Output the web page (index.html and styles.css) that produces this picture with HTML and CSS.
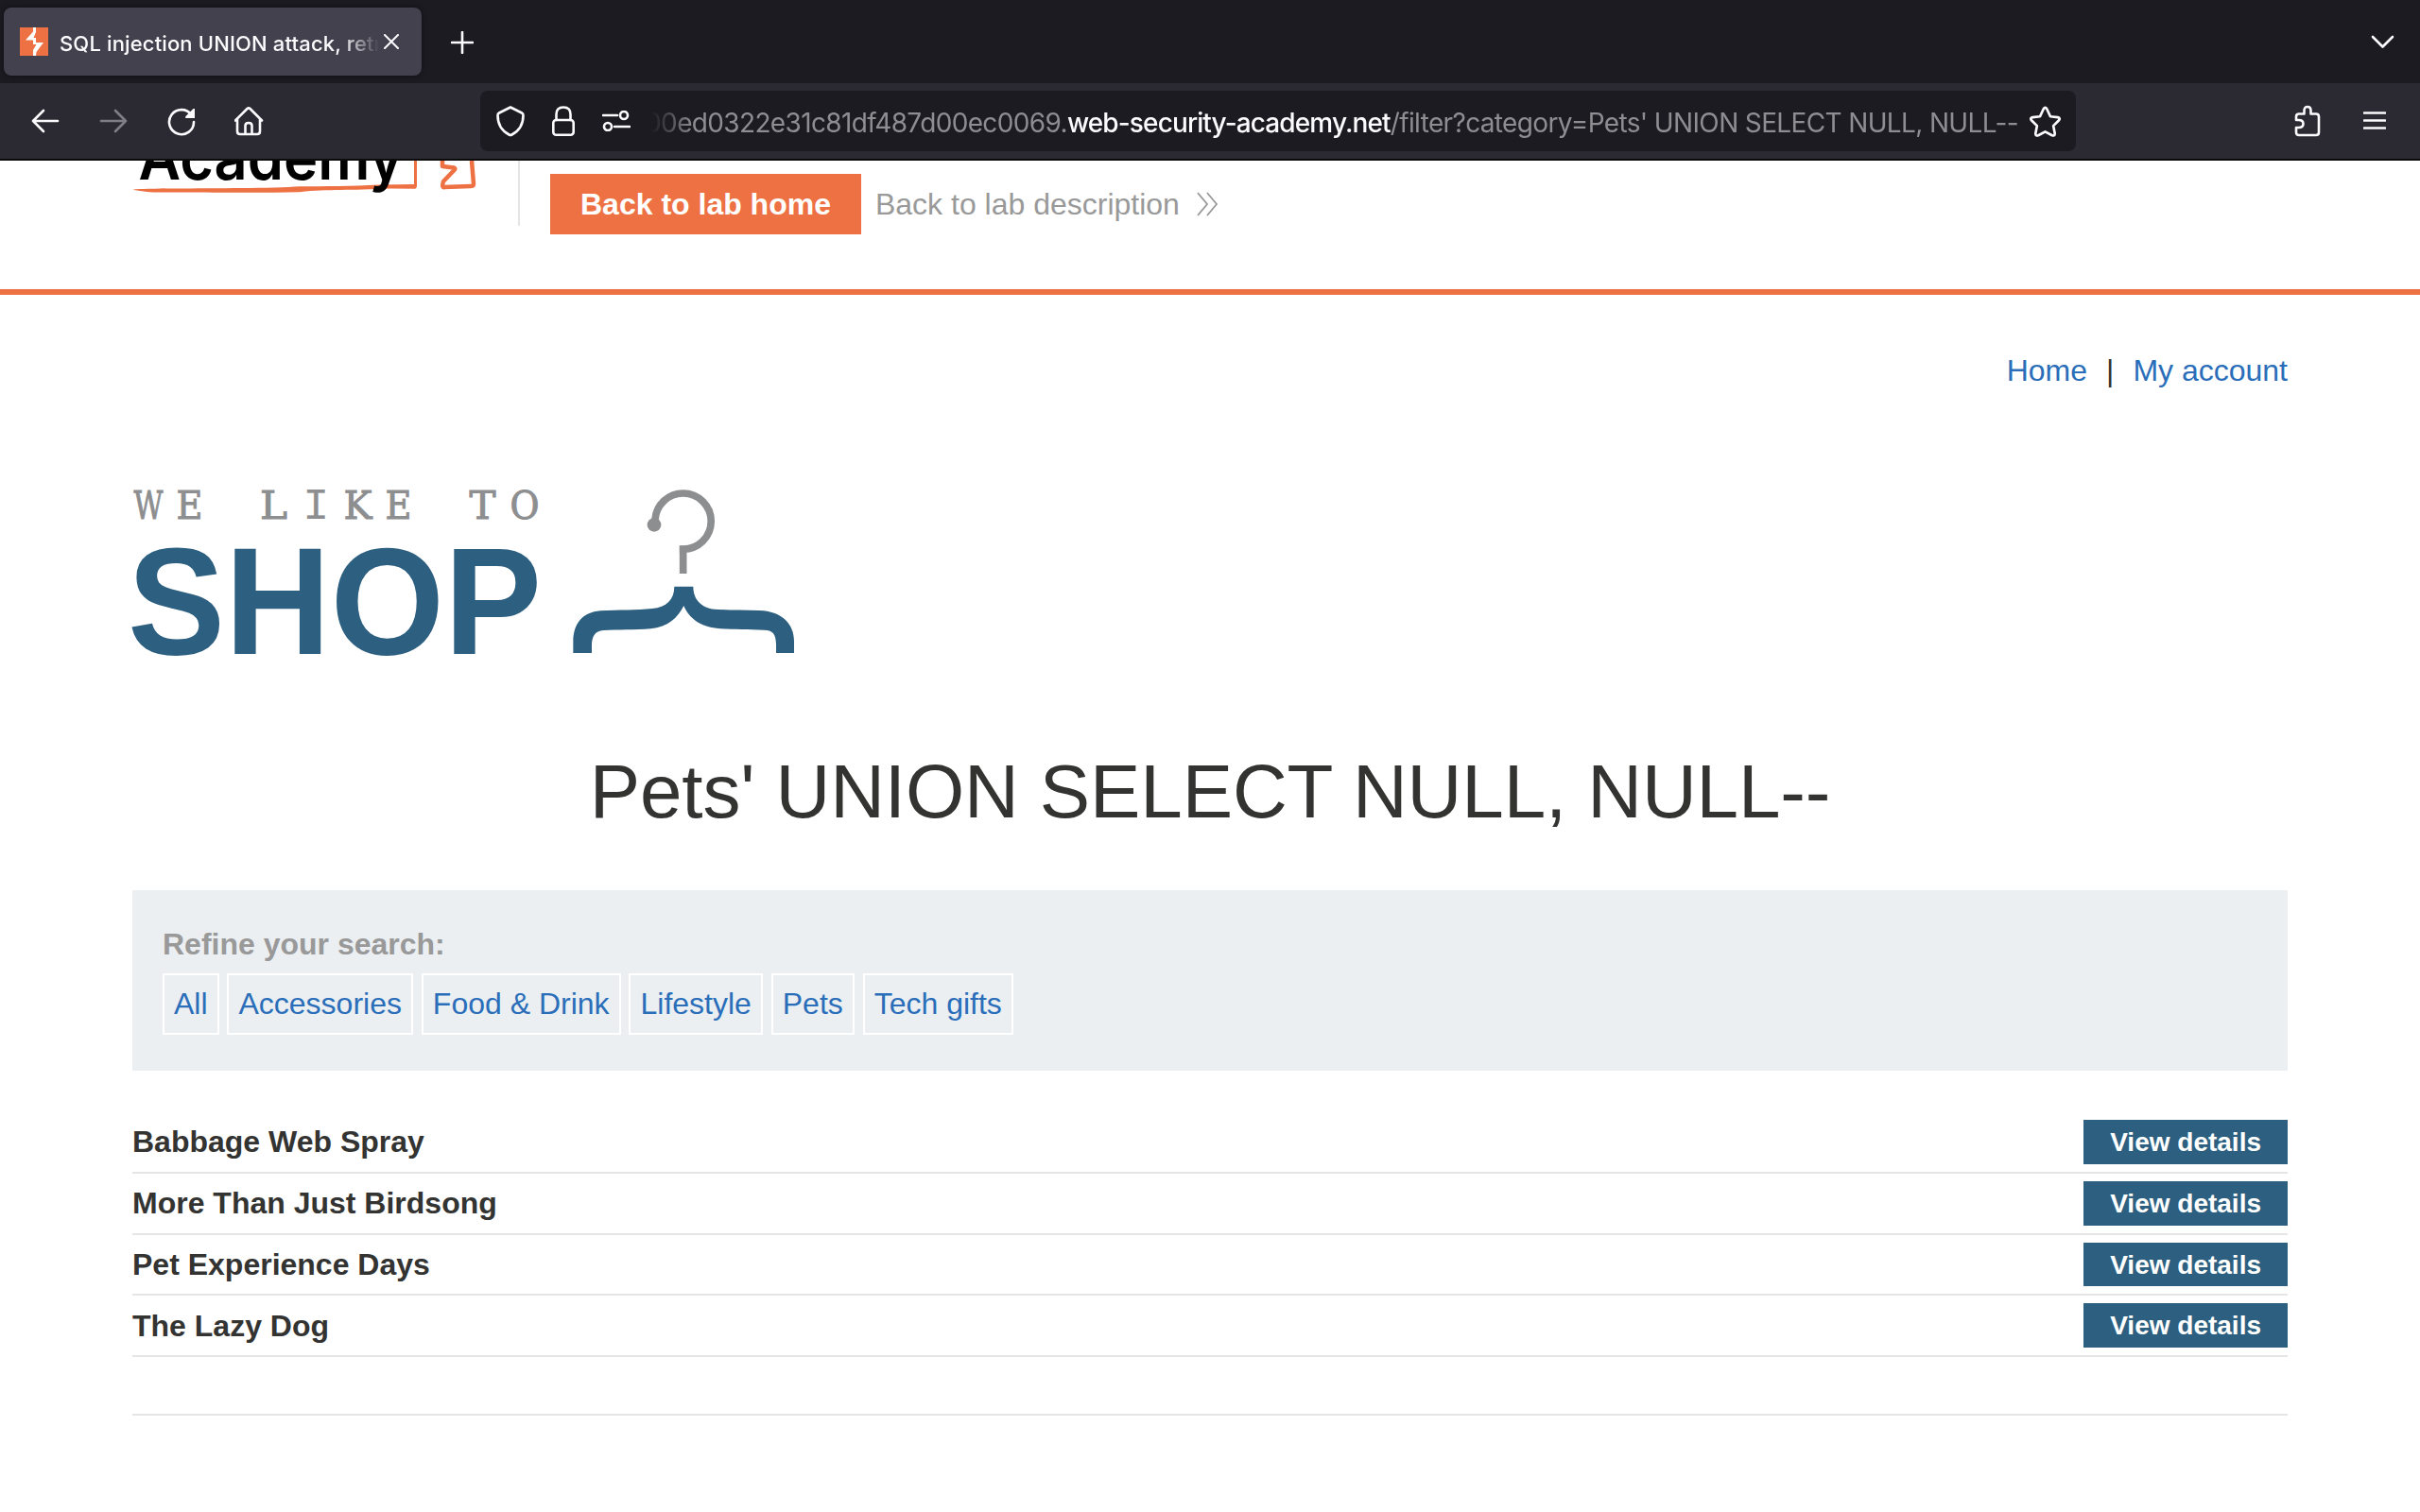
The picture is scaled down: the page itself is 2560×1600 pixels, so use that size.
FILE: index.html
```html
<!DOCTYPE html>
<html lang="en">
<head>
<meta charset="utf-8">
<title>SQL injection UNION attack</title>
<link rel="stylesheet" href="styles.css">
</head>
<body>
<div class="tabbar">
  <div class="tab">
    <svg class="favicon" viewBox="0 0 30 30"><path fill="#ee7144" d="M0 0h30v30H0z"/><path fill="#fff" d="M14 0h3v5l-2.500 6H17v5h8l-7.500 10-.5 4h-3v-6l3.500-6H14v-4.500H6l8-9z"/></svg>
    <span class="tab-title">SQL injection UNION attack, retrieving</span>
    <svg class="close" viewBox="0 0 16 16"><path d="M1 1l14 14M15 1L1 15"/></svg>
  </div>
  <svg class="plus" viewBox="0 0 24 24"><path d="M12 1v22M1 12h22"/></svg>
  <svg class="chevron" viewBox="0 0 26 16"><path d="M3 3l10.500 10.500L24 3"/></svg>
</div>
<div class="toolbar">
  <div class="nav-icons">
    <svg viewBox="0 0 32 32"><path d="M29 16H3M14 5L3 16l11 11"/></svg>
    <svg class="dim" viewBox="0 0 32 32"><path d="M3 16h26M18 5l11 11-11 11"/></svg>
    <svg viewBox="0 0 32 32"><path d="M26.500 9.500A13 13 0 1 0 29 17"/><path class="solid" d="M30 3v10H20.500q-1-1 0-2l8-8z"/></svg>
    <svg viewBox="0 0 32 32"><path d="M1 15.500L13.500 3q1.500-1.400 3 0L29 15.500M3 14v13q0 3 3 3h18q3 0 3-3V14M11.500 30V21q0-3 3.500-3t3.500 3v9"/></svg>
  </div>
  <div class="urlbar">
    <div class="url-icons">
      <svg class="shield" viewBox="0 0 32 34"><path d="M16 2.500l12 6q1.500.8 1.500 2.500C29.500 20 26 27 17.500 31.500q-1.500.8-3 0C6 27 2.500 20 2.500 11q0-1.700 1.500-2.500z"/></svg>
      <svg class="lock" viewBox="0 0 24 32"><rect x="1.300" y="15" width="21.400" height="15.700" rx="3"/><path d="M4.500 15V9q0-7.500 7.500-7.500T19.500 9v6"/></svg>
      <svg class="sliders" viewBox="0 0 30 22"><path d="M1 5h15M13 17h16"/><circle cx="23" cy="5" r="4"/><circle cx="6" cy="17" r="4"/></svg>
    </div>
    <div class="url"><span>00ed0322e31c81df487d00ec0069.<b>web-security-academy.net</b>/filter?category=Pets' UNION SELECT NULL, NULL--</span></div>
    <svg class="star" viewBox="0 0 32 32"><path d="M14.300 3.200q1.700-2.600 3.400 0l3.600 7.700 7.600.9q3 .8 1.200 3l-5.700 5.700 1.500 7.800q0 3-2.800 2L16 26.500l-7.100 3.800q-2.800 1-2.800-2l1.500-7.800-5.700-5.700q-1.800-2.200 1.200-3l7.600-.9z"/></svg>
  </div>
  <svg class="puzzle" viewBox="0 0 28 34"><path d="M2 12.500q0-3 3-3h5.500V6q0-4 3.500-4t3.500 4v3.500H23q3 0 3 3V29q0 3-3 3H5q-3 0-3-3v-5h2.500q5 0 5-4t-5-4H2z"/></svg>
  <svg class="menu" viewBox="0 0 24 20"><path d="M1 1.500h22M1 9.500h22M1 17.500h22"/></svg>
</div>

<header class="lab-header">
  <svg class="academy" viewBox="2 0 370 50">
    <path fill="#ee7144" d="M1 30.500C14 28.600 140 30.200 178 27.200C205 27 232 27.200 262 25.400L299 25V0h3v27q-.4 3-3 2.800L274 29.600C230 31.800 210 30 178 33.200C130 34.500 60 33.200 30 33.600C20 33.500 12 32.800 1 30.500z"/>
    <path class="bolt" d="M329 0v6l12 1.500q2 .5 1 2L330 22q-2 7 1 6l28-1q3 0 3-2.500L360 0"/>
    <text class="academy-text" x="7.500" y="20" textLength="280" lengthAdjust="spacingAndGlyphs">Academy</text>
  </svg>
  <div class="divider"></div>
  <a class="btn-home">Back to lab home</a>
  <a class="desc">Back to lab description
    <svg viewBox="0 0 24 26"><path d="M2 1l10 12L2 25M12 1l10 12-10 12"/></svg></a>
</header>

<main class="page">
  <nav class="top-links"><a>Home</a><span>|</span><a>My account</a></nav>
  <svg class="shop-logo" viewBox="120 500 740 200">
    <text class="tagline"><tspan x="141.500" y="549" textLength="31" lengthAdjust="spacingAndGlyphs">W</tspan><tspan x="186.500" textLength="28" lengthAdjust="spacingAndGlyphs">E</tspan> <tspan x="275" textLength="29" lengthAdjust="spacingAndGlyphs">L</tspan><tspan class="mono" x="320.500">I</tspan><tspan x="363.500" textLength="30" lengthAdjust="spacingAndGlyphs">K</tspan><tspan x="407.500" textLength="28" lengthAdjust="spacingAndGlyphs">E</tspan> <tspan x="496.500" textLength="28" lengthAdjust="spacingAndGlyphs">T</tspan><tspan x="539.500" textLength="31" lengthAdjust="spacingAndGlyphs">O</tspan></text>
    <text class="shop" x="135" y="691.600" textLength="438" lengthAdjust="spacingAndGlyphs">SHOP</text>
    <g transform="translate(580 500) scale(.33333)">
      <path fill="none" stroke="#8d8e90" stroke-width="23" d="M339 150A89 89 0 0 1 428 66A88.500 88.500 0 0 1 428 243.500V321"/>
      <path fill="#8d8e90" d="M416.500 233H429V255H416.500z"/>
      <circle cx="336" cy="166" r="22" fill="#8d8e90"/>
      <path fill="#2c5f80" d="M400 362H460C460 405 488 430 528 434C580 438 620 436 670 438C740 440 780 480 780 535V573H723V545C722 515 715 501 685 500C630 497 590 499 540 495C480 490 447 462 430 423C410 462 380 490 325 496C275 501 220 498 175 501C148 503 138 520 138 550V573H79V535C80 478 110 444 165 439C225 435 280 438 330 432C375 428 400 403 400 362z"/>
    </g>
  </svg>
  <h1>Pets' UNION SELECT NULL, NULL--</h1>
  <section class="filters">
    <div class="label">Refine your search:</div>
    <div class="tags"><a>All</a><a>Accessories</a><a>Food &amp; Drink</a><a>Lifestyle</a><a>Pets</a><a>Tech gifts</a></div>
  </section>
  <div class="products">
    <div class="row"><b>Babbage Web Spray</b><a>View details</a></div>
    <div class="row"><b>More Than Just Birdsong</b><a>View details</a></div>
    <div class="row"><b>Pet Experience Days</b><a>View details</a></div>
    <div class="row"><b>The Lazy Dog</b><a>View details</a></div>
  </div>
  <div class="footer-line"></div>
</main>
</body>
</html>
```
FILE: styles.css
```css
* { box-sizing: border-box; }
body {
  margin: 0;
  width: 2560px;
  height: 1600px;
  overflow: hidden;
  background: #fff;
  color: #333332;
  font: 32px/1.15 "Liberation Sans", Arial, sans-serif;
}
svg { display: block; flex: none; }

/* Browser chrome */
.tabbar, .toolbar {
  display: flex;
  align-items: center;
  font-family: Inter, sans-serif;
  color: #fbfbfe;
}
.tabbar { height: 88px; background: #1c1b22; padding: 0 27px 0 4px; }
.toolbar { height: 82px; background: #2b2a33; border-bottom: 2px solid #0c0c0d; padding: 0 36px 0 32px; }
.tabbar svg, .toolbar svg {
  fill: none;
  stroke: #fbfbfe;
  stroke-width: 2.6;
  stroke-linecap: round;
  stroke-linejoin: round;
}
.tab {
  display: flex;
  align-items: center;
  width: 442px;
  height: 72px;
  padding: 0 24px 0 17px;
  border-radius: 8px;
  background: #42414d;
  box-shadow: 0 0 6px rgba(0, 0, 0, .5);
}
.tabbar .favicon { width: 30px; height: 30px; stroke: none; }
.tab-title {
  flex: 1;
  margin-left: 12px;
  overflow: hidden;
  white-space: nowrap;
  font-size: 22px;
  font-weight: 500;
  letter-spacing: .14px;
  line-height: 32px;
  padding-top: 4px;
  -webkit-mask-image: linear-gradient(90deg, #000 298px, transparent 338px);
  mask-image: linear-gradient(90deg, #000 298px, transparent 338px);
}
.tabbar .close { width: 16px; height: 16px; stroke-width: 2; margin-left: 4px; }
.plus { width: 24px; height: 24px; margin: 2px 0 0 31px; }
.chevron { width: 26px; height: 16px; margin-left: auto; }

.nav-icons { display: flex; gap: 40px; }
.nav-icons svg { width: 32px; height: 32px; }
.toolbar .dim { opacity: .4; }
.toolbar .solid { fill: #fbfbfe; stroke: none; }
.urlbar {
  display: flex;
  align-items: center;
  width: 1688px;
  height: 64px;
  margin-left: 228px;
  padding: 0 16px;
  border-radius: 8px;
  background: #1c1b22;
}
.url-icons { display: flex; align-items: center; width: 165px; }
.shield { width: 32px; height: 34px; }
.lock { width: 24px; height: 32px; margin-left: 28px; }
.sliders { width: 30px; height: 22px; margin-left: 29px; }
.url {
  display: flex;
  justify-content: flex-end;
  width: 1448px;
  overflow: hidden;
  white-space: nowrap;
  font-size: 28px;
  line-height: 40px;
  padding-top: 3px;
  letter-spacing: -.64px;
  color: #8d8d92;
  -webkit-mask-image: linear-gradient(90deg, transparent, #000 44px);
  mask-image: linear-gradient(90deg, transparent, #000 44px);
}
.url b { font-weight: 500; letter-spacing: -.88px; color: #fbfbfe; }
.star { width: 33px; height: 33px; margin-left: 12px; }
.puzzle { width: 28px; height: 34px; margin-left: auto; }
.menu { width: 24px; height: 20px; margin-left: 45px; }

/* Lab banner, scrolled under the toolbar */
.lab-header {
  display: flex;
  align-items: flex-start;
  height: 142px;
  padding-left: 141px;
  border-bottom: 6px solid #ee7144;
}
.academy { width: 370px; height: 50px; }
.academy-text { font: 600 66px Inter, sans-serif; fill: #000; }
.bolt { fill: none; stroke: #ee7144; stroke-width: 4.5; stroke-linejoin: round; }
.divider { width: 2px; height: 69px; margin-left: 37px; background: #e5e5e5; }
.btn-home {
  margin: 14px 0 0 32px;
  padding: 0 32px;
  background: #ee7144;
  color: #fff;
  font-weight: bold;
  line-height: 64px;
}
.desc {
  display: flex;
  align-items: center;
  gap: 17px;
  margin: 14px 0 0 15px;
  color: #999;
  line-height: 64px;
}
.desc svg { width: 24px; height: 26px; fill: none; stroke: #999; stroke-width: 1.8; }

.page { padding: 0 140px; }
.top-links { display: flex; justify-content: flex-end; gap: 20px; height: 188px; padding-top: 62px; }
.top-links a, .tags a { color: #2a6eba; }
.shop-logo { width: 740px; height: 200px; margin-left: -20px; }
.tagline { font: 41px "DejaVu Serif", serif; fill: #8d8e90; stroke: #8d8e90; stroke-width: 1; }
.tagline .mono { font: 46px "Liberation Mono", monospace; stroke-width: .2; }
.shop { font: bold 161.800px "Liberation Sans", Arial, sans-serif; fill: #2c5f80; }
h1 { margin: 92px 0 0; height: 150px; font-size: 80px; line-height: 92px; font-weight: normal; letter-spacing: -.12px; text-align: center; }
.filters { height: 191px; padding: 32px; background: #ebeff2; }
.label { height: 56px; padding-top: 7px; color: #999; font-weight: bold; }
.tags { display: flex; gap: 8.900px; }
.tags a { height: 65px; padding: 0 10px; border: 2px solid #fff; line-height: 61px; }
.products { padding-top: 44px; }
.row {
  display: flex;
  justify-content: space-between;
  align-items: center;
  height: 64.800px;
  border-bottom: 2px solid #e5e5e5;
}
.row b { padding-top: .6px; }
.row a { padding: 1px 28px 0; background: #2c5f80; color: #fff; font-size: 28px; font-weight: bold; line-height: 45.800px; }
.footer-line { height: 62px; border-bottom: 2px solid #e5e5e5; }
```
